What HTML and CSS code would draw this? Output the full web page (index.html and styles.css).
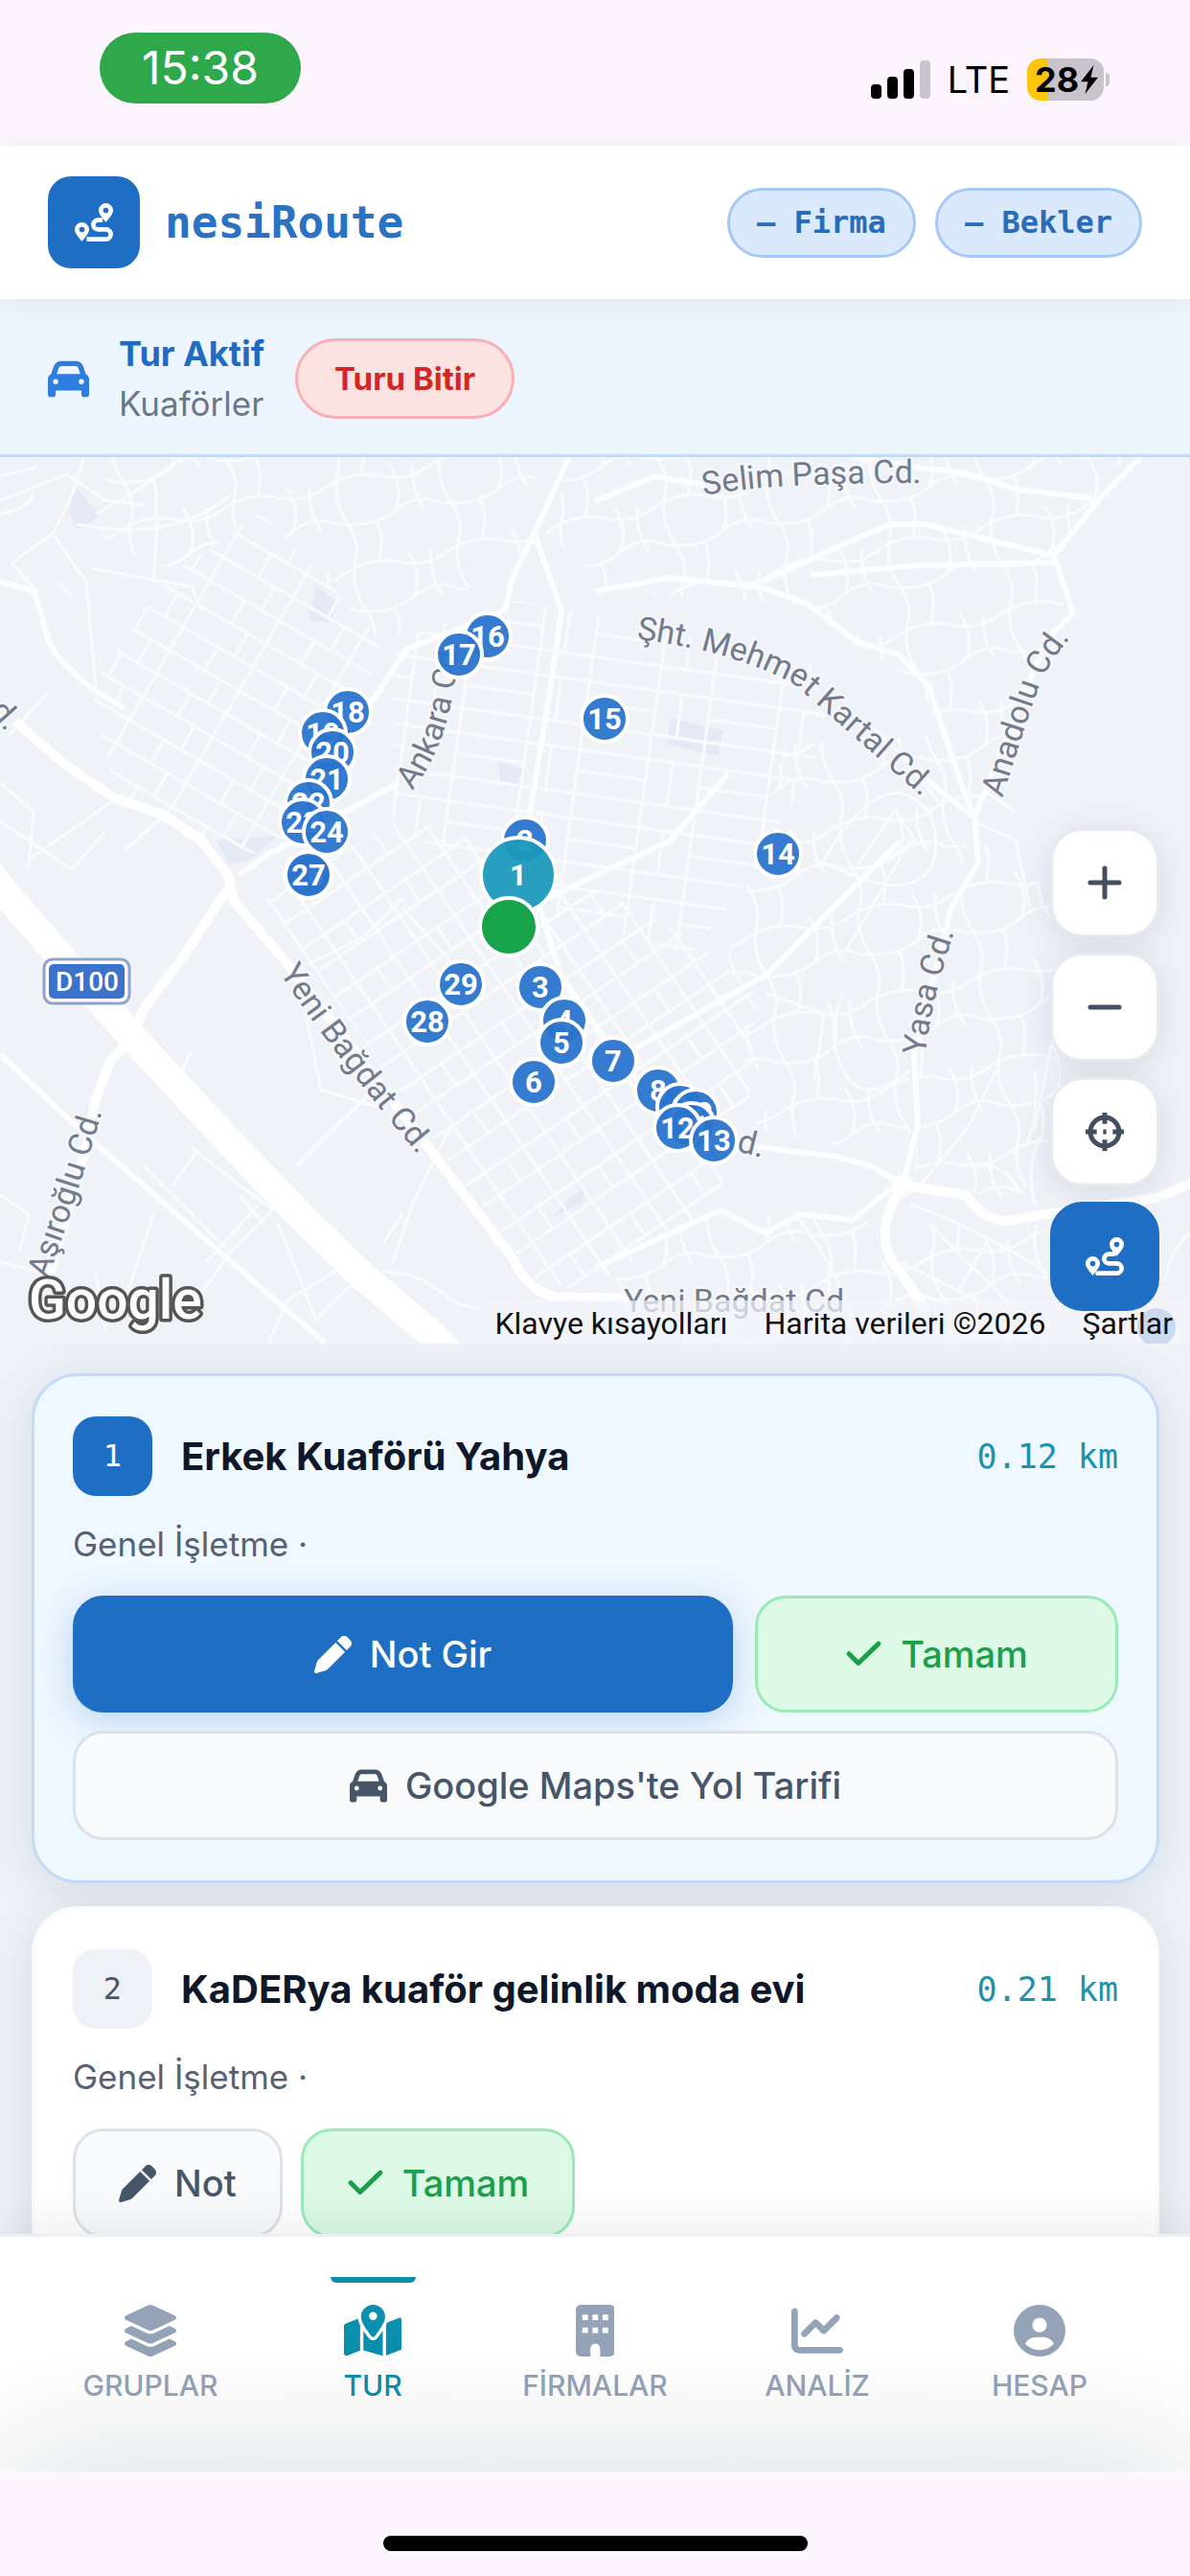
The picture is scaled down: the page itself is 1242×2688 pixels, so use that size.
FILE: index.html
```html
<!DOCTYPE html>
<html lang="tr">
<head>
    <meta charset="UTF-8">
    <meta name="viewport" content="width=device-width, initial-scale=1.0">
    <title>nesiRoute</title>
    <link rel="stylesheet" href="styles.css">
</head>
<body>
    <!-- Shared icons -->
    <svg class="sprite" aria-hidden="true">
        <symbol id="i-route" viewBox="0 0 24 24">
            <path fill="currentColor" fill-rule="evenodd" d="M19.5 0a4.5 4.5 0 0 1 4.5 4.5c0 2.7-3 5.3-4.5 7.5c-1.5-2.2-4.5-4.8-4.5-7.5A4.5 4.5 0 0 1 19.5 0zm0 2.8a1.7 1.7 0 1 0 0 3.4a1.7 1.7 0 1 0 0-3.4zM4.5 12a4.5 4.5 0 0 1 4.5 4.5c0 2.7-3 5.3-4.5 7.5c-1.5-2.2-4.5-4.8-4.5-7.5A4.5 4.5 0 0 1 4.5 12zm0 2.8a1.7 1.7 0 1 0 0 3.4a1.7 1.7 0 1 0 0-3.4z"/>
            <path fill="none" stroke="currentColor" stroke-width="2.8" d="M17.5 10.6h-3a2.9 2.9 0 0 0 0 5.8h5a3.1 3.1 0 0 1 0 6.2H7.5"/>
        </symbol>
        <symbol id="i-car" viewBox="0 0 512 512">
            <path fill="currentColor" d="M135.2 117.4L109.1 192H402.9l-26.1-74.6C372.3 104.6 360.2 96 346.6 96H165.4c-13.6 0-25.7 8.6-30.2 21.4zM39.6 196.8L74.8 96.3C88.3 57.8 124.6 32 165.4 32H346.6c40.8 0 77.1 25.8 90.6 64.3l35.2 100.5c23.2 9.6 39.6 32.5 39.6 59.2V448c0 17.7-14.3 32-32 32H448c-17.7 0-32-14.3-32-32V400H96v48c0 17.7-14.3 32-32 32H32c-17.7 0-32-14.3-32-32V256c0-26.7 16.4-49.6 39.6-59.2zM128 288a32 32 0 1 0-64 0 32 32 0 1 0 64 0zm288 32a32 32 0 1 0 0-64 32 32 0 1 0 0 64z"/>
        </symbol>
        <symbol id="i-pen" viewBox="0 0 512 512">
            <path fill="currentColor" d="M362.7 19.3L314.3 67.7 444.3 197.7l48.4-48.4c25-25 25-65.5 0-90.5L453.3 19.3c-25-25-65.5-25-90.5 0zm-71 71L58.6 323.5c-10.4 10.4-18 23.3-22.2 37.4L1 481.2C-1.5 489.7 .8 498.8 7 505s15.3 8.5 23.7 6.1l120.3-35.4c14.1-4.2 27-11.8 37.4-22.2L421.7 220.3 291.7 90.3z"/>
        </symbol>
        <symbol id="i-check" viewBox="0 0 24 24">
            <path fill="none" stroke="currentColor" stroke-width="3" stroke-linecap="round" stroke-linejoin="round" d="M2.5 11.5l6 6L21.500 5"/>
        </symbol>
    </svg>

    <div class="status-bar">
        <span class="clock">15:38</span>
        <div class="status-right">
            <svg class="signal" viewBox="0 0 62 40" aria-hidden="true">
                <rect x="0" y="25" width="11" height="15" rx="4"/>
                <rect x="17" y="17" width="11" height="23" rx="4"/>
                <rect x="34" y="9" width="11" height="31" rx="4"/>
                <rect x="51" y="0" width="11" height="40" rx="4" fill="#c9c3cc"/>
            </svg>
            <span class="network">LTE</span>
            <span class="battery">28<svg viewBox="0 0 12 20" aria-hidden="true"><path d="M9 0L0 11.5h5L3 20l9-11.500H7z"/></svg></span>
        </div>
    </div>

    <header class="topbar">
        <div class="logo"><svg><use href="#i-route"/></svg></div>
        <h1>nesiRoute</h1>
        <span class="chip">— Firma</span>
        <span class="chip">— Bekler</span>
    </header>

    <section class="tour-bar">
        <svg class="tour-icon"><use href="#i-car"/></svg>
        <div class="tour-info">
            <strong>Tur Aktif</strong>
            <span>Kuaförler</span>
        </div>
        <button class="end-tour">Turu Bitir</button>
    </section>

    <section class="map">
        <svg class="map-canvas" viewBox="0 0 1242 925" preserveAspectRatio="xMidYMid slice">
            <defs>
                <pattern id="grid-west" width="84" height="56" patternUnits="userSpaceOnUse" patternTransform="rotate(30)">
                    <path class="minor" d="M0 2H84M0 30H84M2 0V56M44 0V30M64 30V56"/>
                </pattern>
                <pattern id="grid-mid" width="128" height="72" patternUnits="userSpaceOnUse" patternTransform="rotate(8)">
                    <path class="minor" d="M0 2H128M0 24H74M0 48H128M2 0V72M74 0V72M100 2V48"/>
                </pattern>
                <pattern id="grid-south" width="76" height="60" patternUnits="userSpaceOnUse" patternTransform="rotate(-34)">
                    <path class="minor" d="M0 2H76M0 30H76M2 0V60M28 0V30M50 0V60"/>
                </pattern>
                <pattern id="grid-hill" width="110" height="92" patternUnits="userSpaceOnUse" patternTransform="rotate(-12)">
                    <path class="minor" d="M0 8Q30-2 56 10T110 8M0 50Q36 62 62 48T110 50M10 0Q0 24 10 50T10 92M66 0Q76 28 62 48M40 54Q46 70 36 92M36 0V4M90 5Q82 28 92 53"/>
                </pattern>
            </defs>

            <rect width="1242" height="925" fill="#eff2f7"/>
            <path fill="#e4eaf5" d="M78 28L104 62L80 76L72 56zM330 135L352 150L345 172L322 170zM225 400L290 395L262 420L240 425zM520 318L548 326L544 344L522 338zM700 272L755 285L750 312L696 300zM588 780L610 762L608 778L578 792z"/>

            <path fill="url(#grid-hill)" d="M110 -5H560V90L400 195L270 55L190 120L110 90z"/>
            <path fill="url(#grid-west)" d="M95 240L175 125L272 58L400 190L372 260L358 350L270 415L210 395L120 352z"/>
            <path fill="url(#grid-mid)" d="M412 190L540 150L590 160L850 215L860 300L790 430L720 520L560 470L410 380z"/>
            <path fill="url(#grid-south)" d="M275 460L420 375L560 420L720 500L790 560L780 700L740 790L610 870L560 860L455 715z"/>
            <path fill="url(#grid-hill)" d="M600 -5H1180L1100 105L1115 175L1020 370L960 240L840 155L640 140L570 80z"/>
            <path fill="url(#grid-hill)" d="M820 300L985 290L1015 380L995 470L950 620L950 735L790 700L760 520z"/>
            <path fill="url(#grid-hill)" d="M1020 400L1095 450L1110 700L1060 780L955 750L960 620z"/>
            <path fill="url(#grid-hill)" d="M640 840L750 790L930 800L1092 800L1095 925H660z"/>

            <g class="minor">
                <path d="M0 45L70 18L110 45L150 50M0 20L40 10M-5 60Q30 55 35 38M12 110L55 80L75 40L88 0M55 80L90 130L100 240M12 110L38 140M60 130L75 145"/>
                <path d="M95 116L160 128L165 60M160 128L200 135L210 160M100 60L150 30L190 0M80 70Q180 90 240 40"/>
                <path d="M0 340L35 370L30 430M50 245L10 290M0 380L75 430L110 390M30 420L130 350M130 410L170 375L210 395"/>
                <path d="M0 770L30 790L20 830M0 840L40 850M90 870L130 880L160 790M110 910L100 850M200 620L180 660M200 720L250 760L285 785L240 830M180 760L205 725M150 740L240 830M215 840L270 780M250 770L275 800M190 900L240 830M280 925L300 880L350 850M290 800L330 900L380 850M400 850Q440 850 470 880L500 890M410 840L430 780L470 700M310 740L350 700L390 660M320 530L380 500L420 460M315 560L335 660L400 680M420 470L500 560M400 820L420 790"/>
                <path d="M851 270Q900 265 930 300L980 360M860 420Q900 350 940 350Q985 365 975 420Q960 460 900 440L850 420M895 425L935 368L955 400L925 420M880 520L950 400M1017 380L1060 400L1075 470M1030 350L1060 370"/>
                <path d="M880 560Q860 600 880 640T950 640M800 560L860 580L850 650M1040 640L1010 700L960 760M1065 770Q1050 730 1000 740M1100 600L1080 700"/>
                <path d="M1070 720Q1085 690 1080 640M1080 780Q1070 740 1085 710M1215 860Q1225 820 1242 810M1200 900V860M830 790Q870 840 890 900M950 780Q1010 800 1092 850M940 840L1060 900M970 800L1095 925M1000 870L1030 820"/>
            </g>

            <g class="street">
                <path d="M0 130L36 140L51 193Q60 212 95 241L130 262"/>
                <path d="M594 0L562 70L535 126L527 160L425 200L385 260M558 80L586 160L574 243L554 366L550 426"/>
                <path d="M416 340L368 366L277 416L250 436"/>
                <path d="M621 46L684 20L740 30M621 140L700 126L795 136L843 153L894 193L938 206L970 240L985 286L1005 346L1017 376"/>
                <path d="M965 12Q1010 14 1057 33L1140 43M890 0L965 12M847 123L958 113L1100 110M795 130L882 90L930 70L965 70L1100 103"/>
                <path d="M1191 0L1148 43L1100 103L1120 163L1092 190L1017 376L1021 423L993 470L954 626L958 696L942 760M966 336L1017 376"/>
                <path d="M0 623L71 690L111 726L222 823L340 925"/>
                <path d="M550 426L585 540L640 620L700 690L791 720L874 730L910 740L942 760"/>
                <path d="M621 846L752 786L799 810L835 790L890 796L930 763"/>
                <path d="M550 470L700 400L760 330M640 630L800 540L940 400"/>
                <circle cx="942" cy="760" r="9"/>
            </g>

            <g class="avenue">
                <path d="M16 276L67 320L119 356L170 373L210 400L238 436L244 463L301 530L447 720L535 836Q550 870 580 876L660 878"/>
                <path d="M238 450L190 523L150 576L135 610L115 630L99 673L91 716L50 860"/>
                <path d="M942 760L1009 770Q1025 796 1050 797L1092 790L1207 773L1250 755M942 760Q910 810 934 843L968 890"/>
            </g>
            <path class="highway" d="M-20 423L12 463L71 530L139 606L238 713L317 795L380 856L450 915L480 945"/>

            <g class="label">
                <path id="p-selim" fill="none" d="M735 40Q800 26 985 27"/>
                <path id="p-kartal" fill="none" d="M664 190Q766 202 830 238L980 370"/>
                <path id="p-anadolu" fill="none" d="M1046 356Q1070 280 1084 240Q1096 208 1140 164"/>
                <path id="p-ankara" fill="none" d="M430 348Q478 290 480 170"/>
                <path id="p-yeni" fill="none" d="M292 538Q340 615 470 768"/>
                <path id="p-yasa" fill="none" d="M966 624Q972 560 1005 470"/>
                <path id="p-asir" fill="none" d="M50 858Q88 750 116 650"/>
                <text><textPath href="#p-selim">Selim Paşa Cd.</textPath></text>
                <text><textPath href="#p-kartal">Şht. Mehmet Kartal Cd.</textPath></text>
                <text><textPath href="#p-anadolu">Anadolu Cd.</textPath></text>
                <text><textPath href="#p-ankara">Ankara Cd.</textPath></text>
                <text><textPath href="#p-yeni">Yeni Bağdat Cd.</textPath></text>
                <text><textPath href="#p-yasa">Yasa Cd.</textPath></text>
                <text><textPath href="#p-asir">Aşıroğlu Cd.</textPath></text>
                <text transform="translate(-12 266) rotate(48)">d.</text>
                <text transform="translate(768 724) rotate(14)">d.</text>
                <text x="651" y="892">Yeni Bağdat Cd</text>
            </g>

            <rect x="46" y="524" width="89" height="46" rx="9" fill="#fff" stroke="#8fa3c9" stroke-width="3"/>
            <rect x="51" y="529" width="79" height="36" rx="5" fill="#3b72cc"/>
            <text class="shield" x="91" y="557">D100</text>
            <circle cx="1207" cy="908" r="20" fill="#6d97d6"/>

            <g class="pins" id="pins"></g>
            <text class="google" x="30" y="899">Google</text>
        </svg>

        <div class="attribution">
            <a href="#">Klavye kısayolları</a>
            <span>Harita verileri ©2026</span>
            <a href="#">Şartlar</a>
        </div>

        <div class="map-controls">
            <button aria-label="Yakınlaştır"><svg viewBox="0 0 24 24"><path d="M12 3v18M3 12h18"/></svg></button>
            <button aria-label="Uzaklaştır"><svg viewBox="0 0 24 24"><path d="M3 12h18"/></svg></button>
            <button aria-label="Konumum"><svg class="crosshair" viewBox="0 0 24 24"><circle cx="12" cy="12" r="9"/><path d="M12 0v7M12 17v7M0 12h7M17 12h7M11 12h2"/></svg></button>
            <button class="primary" aria-label="Rota"><svg class="route"><use href="#i-route"/></svg></button>
        </div>
    </section>

    <main class="stops">
        <article class="card active">
            <div class="card-head">
                <span class="num">1</span>
                <h2>Erkek Kuaförü Yahya</h2>
                <span class="distance">0.12 km</span>
            </div>
            <p>Genel İşletme ·</p>
            <div class="actions wide">
                <button class="btn blue"><svg><use href="#i-pen"/></svg>Not Gir</button>
                <button class="btn green"><svg><use href="#i-check"/></svg>Tamam</button>
                <button class="btn directions"><svg><use href="#i-car"/></svg>Google Maps'te Yol Tarifi</button>
            </div>
        </article>

        <article class="card">
            <div class="card-head">
                <span class="num">2</span>
                <h2>KaDERya kuaför gelinlik moda evi</h2>
                <span class="distance">0.21 km</span>
            </div>
            <p>Genel İşletme ·</p>
            <div class="actions">
                <button class="btn"><svg><use href="#i-pen"/></svg>Not</button>
                <button class="btn green"><svg><use href="#i-check"/></svg>Tamam</button>
            </div>
        </article>
    </main>

    <nav class="tabs">
        <a href="#">
            <svg viewBox="32 0 512 512"><path d="M264.5 5.2c14.9-6.9 32.1-6.9 47 0l218.6 101c8.5 3.9 13.9 12.4 13.9 21.8s-5.4 17.9-13.9 21.8l-218.6 101c-14.9 6.9-32.1 6.9-47 0L45.9 149.8C37.4 145.8 32 137.3 32 128s5.4-17.9 13.9-21.8L264.5 5.2zM476.9 209.6l53.2 24.6c8.5 3.9 13.9 12.4 13.9 21.8s-5.4 17.9-13.9 21.8l-218.6 101c-14.9 6.9-32.1 6.9-47 0L45.9 277.8C37.4 273.8 32 265.3 32 256s5.4-17.9 13.9-21.8l53.2-24.6 152 70.2c23.4 10.8 50.4 10.8 73.8 0l152-70.2zm-152 198.2l152-70.2 53.2 24.6c8.5 3.9 13.9 12.4 13.9 21.8s-5.4 17.9-13.9 21.8l-218.6 101c-14.9 6.9-32.1 6.9-47 0L45.9 405.8C37.4 401.8 32 393.3 32 384s5.4-17.9 13.9-21.8l53.2-24.6 152 70.2c23.4 10.8 50.4 10.8 73.8 0z"/></svg>
            GRUPLAR
        </a>
        <a href="#" class="current">
            <svg viewBox="0 0 576 512"><path d="M408 120c0 54.6-73.1 151.9-105.2 192c-7.7 9.6-22 9.6-29.6 0C241.1 271.9 168 174.6 168 120C168 53.7 221.7 0 288 0s120 53.7 120 120zm8 80.4c3.5-6.9 6.7-13.8 9.6-20.6c.5-1.2 1-2.5 1.5-3.7l116-46.4C558.9 123.4 576 135 576 152V422.8c0 9.8-6 18.6-15.1 22.3L416 503V200.4zM137.6 138.3c2.4 14.1 7.2 28.3 12.8 41.5c2.9 6.8 6.1 13.7 9.6 20.6V451.8L32.9 502.7C17.1 509 0 497.4 0 480.4V209.6c0-9.8 6-18.6 15.1-22.3l122.6-49zM327.8 332c13.9-17.4 35.7-45.7 56.2-77V504.3L192 449.4V255c20.5 31.3 42.3 59.6 56.2 77c20.5 25.6 59.1 25.6 79.6 0zM288 152a40 40 0 1 0 0-80 40 40 0 1 0 0 80z"/></svg>
            TUR
        </a>
        <a href="#">
            <svg viewBox="0 0 384 512"><path fill-rule="evenodd" d="M48 0H336a48 48 0 0 1 48 48V464a48 48 0 0 1-48 48H240V432a48 48 0 0 0-96 0V512H48a48 48 0 0 1-48-48V48A48 48 0 0 1 48 0zM64 96V152H120V96zM164 96V152H220V96zM264 96V152H320V96zM64 224V280H120V224zM164 224V280H220V224zM264 224V280H320V224z"/></svg>
            FİRMALAR
        </a>
        <a href="#">
            <svg viewBox="0 0 512 512"><path d="M64 64c0-17.7-14.3-32-32-32S0 46.3 0 64V400c0 44.2 35.8 80 80 80H480c17.7 0 32-14.3 32-32s-14.3-32-32-32H80c-8.8 0-16-7.2-16-16V64zm406.6 86.6c12.5-12.5 12.5-32.8 0-45.3s-32.8-12.5-45.3 0L320 210.7l-57.4-57.4c-12.5-12.5-32.8-12.5-45.3 0l-112 112c-12.5 12.5-12.5 32.8 0 45.3s32.8 12.5 45.3 0L240 221.3l57.4 57.4c12.5 12.5 32.8 12.5 45.3 0l128-128z"/></svg>
            ANALİZ
        </a>
        <a href="#">
            <svg viewBox="0 0 512 512"><path fill-rule="evenodd" d="M399 384.2C376.9 345.8 335.4 320 288 320H224c-47.4 0-88.9 25.8-111 64.2c35.2 39.2 86.2 63.8 143 63.8s107.8-24.7 143-63.8zM0 256a256 256 0 1 1 512 0A256 256 0 1 1 0 256zm256 16a72 72 0 1 0 0-144 72 72 0 1 0 0 144z"/></svg>
            HESAP
        </a>
    </nav>

    <footer class="home-area"><div class="home-bar"></div></footer>

    <script>
        // [label, x, y], later pins are drawn over earlier ones
        const pins = [
            ['16', 509, 187], ['17', 479, 206], ['15', 631, 273], ['14', 812, 414],
            ['18', 363, 266], ['19', 337, 288], ['20', 347, 308], ['21', 341, 336],
            ['22', 322, 361], ['23', 316, 381], ['24', 341, 391],
            ['26', 321, 436], ['27', 322, 436],
            ['2', 548, 400], ['3', 564, 553], ['4', 589, 588], ['5', 586, 611],
            ['6', 557, 652], ['28', 446, 589], ['29', 481, 550], ['7', 640, 630],
            ['8', 687, 661], ['9', 710, 678], ['10', 726, 684], ['11', 722, 698],
            ['12', 707, 700], ['13', 745, 713]
        ];
        const layer = document.getElementById('pins');

        function drawPin(label, x, y, r, cls) {
            const ns = 'http://www.w3.org/2000/svg';
            const g = document.createElementNS(ns, 'g');
            g.setAttribute('class', cls);
            const circle = document.createElementNS(ns, 'circle');
            circle.setAttribute('cx', x);
            circle.setAttribute('cy', y);
            circle.setAttribute('r', r);
            const text = document.createElementNS(ns, 'text');
            text.setAttribute('x', x);
            text.setAttribute('y', y + 11);
            text.textContent = label;
            g.append(circle, text);
            layer.append(g);
        }

        pins.forEach(pin => drawPin(pin[0], pin[1], pin[2], 24, 'pin'));
        drawPin('1', 541, 436, 39, 'pin next');
        drawPin('', 531, 490, 30, 'pin me');
    </script>
</body>
</html>
```

FILE: styles.css
```css
* {
    box-sizing: border-box;
}
body {
    margin: 0;
    height: 100vh;
    display: flex;
    flex-direction: column;
    font-family: Inter, "Noto Sans", sans-serif;
    background: #eef2f7;
    color: #0f172a;
    overflow: hidden;
}
button {
    font: inherit;
    cursor: pointer;
}
a {
    color: inherit;
    text-decoration: none;
}
.sprite {
    position: absolute;
    width: 0;
    height: 0;
}

/* Status bar */
.status-bar {
    flex: none;
    height: 152px;
    padding: 34px 84px 0 104px;
    display: flex;
    justify-content: space-between;
    align-items: flex-start;
    background: #fdf5fe;
}
.clock {
    padding: 0 44px;
    border-radius: 37px;
    background: #2fa84c;
    color: #fff;
    font-size: 48px;
    font-weight: 400;
    line-height: 74px;
}
.status-right {
    display: flex;
    align-items: center;
    gap: 18px;
    height: 98px;
    color: #000;
}
.signal {
    width: 62px;
    height: 40px;
}
.network {
    font-size: 38px;
}
.battery {
    position: relative;
    display: flex;
    align-items: center;
    gap: 2px;
    width: 80px;
    height: 44px;
    margin-right: 6px;
    padding-left: 8px;
    border-radius: 14px;
    background: linear-gradient(to right, #fcc60a 28%, #c9c3cc 28%);
    font-size: 36px;
    font-weight: 700;
}
.battery::after {
    content: "";
    position: absolute;
    right: -6px;
    width: 4px;
    height: 14px;
    border-radius: 0 4px 4px 0;
    background: #c9c3cc;
}
.battery svg {
    width: 18px;
    height: 30px;
}

/* Header */
.topbar {
    flex: none;
    position: relative;
    z-index: 1;
    height: 160px;
    padding: 0 50px;
    display: flex;
    align-items: center;
    gap: 20px;
    background: #fff;
    box-shadow: 0 6px 30px rgba(15, 23, 42, 0.06);
}
.logo {
    display: flex;
    align-items: center;
    justify-content: center;
    width: 96px;
    height: 96px;
    border-radius: 24px;
    background: #1e6fc4;
    color: #fff;
}
.logo svg {
    width: 40px;
    height: 40px;
}
.topbar h1 {
    flex: 1;
    margin: 0 0 0 6px;
    color: #2a72c3;
    font-family: "DejaVu Sans Mono", monospace;
    font-size: 46px;
    font-weight: 700;
}
.chip {
    padding: 0 28px;
    border: 3px solid #a5c8f7;
    border-radius: 37px;
    background: #dbe9fc;
    color: #2a6cb8;
    font-family: "DejaVu Sans Mono", monospace;
    font-size: 32px;
    font-weight: 700;
    line-height: 67px;
}

/* Active tour */
.tour-bar {
    flex: none;
    height: 165px;
    padding: 4px 50px 0;
    display: flex;
    align-items: center;
    border-bottom: 3px solid #c3dbf8;
    background: #edf6fe;
}
.tour-icon {
    width: 43px;
    height: 43px;
    margin-right: 31px;
    color: #2f7de1;
}
.tour-info {
    display: flex;
    flex-direction: column;
    margin-right: 32px;
    line-height: 52px;
}
.tour-info strong {
    color: #1e6bc0;
    font-size: 36px;
    font-weight: 700;
}
.tour-info span {
    color: #6b7788;
    font-size: 35px;
}
.end-tour {
    height: 84px;
    padding: 0 38px;
    border: 3px solid #f9b0b5;
    border-radius: 42px;
    background: #fde2e2;
    color: #d42626;
    font-size: 33px;
    font-weight: 700;
}

/* Map */
.map {
    flex: none;
    position: relative;
    aspect-ratio: 1242 / 925;
    overflow: hidden;
}
.map-canvas {
    display: block;
    width: 100%;
    height: 100%;
    font-family: Roboto, sans-serif;
}
.minor {
    fill: none;
    stroke: #fafbfd;
    stroke-width: 3;
}
.street {
    fill: none;
    stroke: #fcfdfe;
    stroke-width: 6;
    stroke-linejoin: round;
}
.avenue {
    fill: none;
    stroke: #fff;
    stroke-width: 10;
    stroke-linejoin: round;
}
.highway {
    fill: none;
    stroke: #fff;
    stroke-width: 30;
    stroke-linejoin: round;
}
.label text {
    fill: #737b8a;
    stroke: #f4f6fa;
    stroke-width: 5;
    paint-order: stroke;
    font-size: 34px;
}
.shield {
    fill: #fff;
    font-size: 28px;
    font-weight: 500;
    text-anchor: middle;
}
.pin circle {
    fill: #2a74cd;
    fill-opacity: 0.95;
    stroke: #fff;
    stroke-width: 4;
}
.pin text {
    fill: #fff;
    font-size: 31px;
    font-weight: 700;
    text-anchor: middle;
}
.next circle {
    fill: #1c9aba;
}
.me circle {
    fill: #16a34a;
    fill-opacity: 1;
}
.google {
    fill: #fff;
    stroke: #555;
    stroke-width: 7;
    stroke-linejoin: round;
    paint-order: stroke;
    font-size: 57px;
    font-weight: 500;
}
.attribution {
    position: absolute;
    right: 0;
    bottom: 0;
    display: flex;
    gap: 38px;
    padding: 3px 18px 0 16px;
    background: rgba(243, 245, 249, 0.7);
    color: #111;
    font-family: Roboto, sans-serif;
    font-size: 32px;
    line-height: 42px;
}
.map-controls {
    position: absolute;
    right: 32px;
    bottom: 34px;
    display: flex;
    flex-direction: column;
    gap: 16px;
}
.map-controls button {
    display: flex;
    align-items: center;
    justify-content: center;
    width: 114px;
    height: 114px;
    padding: 0;
    border: 3px solid #e6eaf1;
    border-radius: 34px;
    background: #fff;
    color: #434e60;
    box-shadow: 0 6px 36px rgba(15, 23, 42, 0.1);
}
.map-controls svg {
    width: 40px;
    height: 40px;
    fill: none;
    stroke: currentColor;
    stroke-width: 3;
    stroke-linecap: round;
}
.map-controls .crosshair {
    stroke-linecap: butt;
}
.map-controls .primary {
    border-color: #1e6fc4;
    background: #1e6fc4;
    color: #fff;
    box-shadow: none;
}
.map-controls .route {
    stroke: none;
}

/* Stop list */
.stops {
    flex: 1;
    min-height: 0;
    padding: 31px 32px 0 33px;
    overflow: hidden;
}
.card {
    margin-bottom: 24px;
    padding: 42px 40px;
    border: 3px solid #f8fafc;
    border-radius: 48px;
    background: #fff;
    box-shadow: 0 8px 48px rgba(30, 64, 120, 0.12);
}
.card.active {
    border-color: #c3dbf8;
    background: #eff7ff;
}
.card-head {
    display: flex;
    align-items: center;
}
.num {
    width: 83px;
    border-radius: 24px;
    background: #eef1f6;
    color: #475569;
    font-family: "DejaVu Sans Mono", monospace;
    font-size: 32px;
    line-height: 83px;
    text-align: center;
}
.active .num {
    background: #1e6fc4;
    color: #fff;
}
.card h2 {
    flex: 1;
    margin: 0 0 0 30px;
    font-size: 40px;
    font-weight: 700;
}
.distance {
    color: #1c93ae;
    font-family: "DejaVu Sans Mono", monospace;
    font-size: 35px;
}
.card p {
    margin: 24px 0 28px;
    color: #566273;
    font-size: 35px;
    line-height: 52px;
}
.actions {
    display: flex;
    gap: 19px;
}
.wide {
    display: grid;
    grid-template-columns: 20fr 11fr;
    gap: 19px 23px;
}
.btn {
    display: flex;
    align-items: center;
    justify-content: center;
    gap: 19px;
    height: 114px;
    padding: 0 45px;
    border: 3px solid #dce1ea;
    border-radius: 32px;
    background: #f8fafc;
    color: #475569;
    font-size: 38px;
    font-weight: 500;
}
.btn svg {
    width: 39px;
    height: 39px;
}
.wide .blue,
.wide .green {
    height: 122px;
}
.blue {
    border-color: #1e6fc4;
    background: #1e6fc4;
    color: #fff;
    box-shadow: 0 8px 36px rgba(30, 111, 196, 0.25);
}
.green {
    border-color: #9aeab8;
    background: #dcfae6;
    color: #1b9f4b;
}
.directions {
    grid-column: 1 / -1;
}

/* Bottom tabs */
.tabs {
    flex: none;
    position: relative;
    height: 248px;
    padding: 42px 41px 0;
    display: grid;
    grid-template-columns: repeat(5, 1fr);
    border-top: 3px solid #eceff4;
    background: #fff;
    box-shadow: 0 -8px 48px rgba(15, 23, 42, 0.08);
}
.tabs a {
    position: relative;
    display: flex;
    flex-direction: column;
    align-items: center;
    padding-top: 29px;
    gap: 13px;
    color: #94a3b8;
    font-size: 30px;
    font-weight: 500;
    line-height: 34px;
}
.tabs svg {
    height: 54px;
    fill: currentColor;
}
.tabs .current {
    color: #0b8fae;
}
.current::before {
    content: "";
    position: absolute;
    top: 0;
    width: 89px;
    height: 6px;
    border-radius: 0 0 6px 6px;
    background: #0b8fae;
}
.home-area {
    flex: none;
    position: relative;
    height: 109px;
    display: flex;
    justify-content: center;
    align-items: flex-end;
    padding-bottom: 26px;
    background: #fdf6ff;
    box-shadow: 0 -10px 140px rgba(15, 23, 42, 0.16);
}
.home-bar {
    width: 443px;
    height: 16px;
    border-radius: 8px;
    background: #000;
}
```
